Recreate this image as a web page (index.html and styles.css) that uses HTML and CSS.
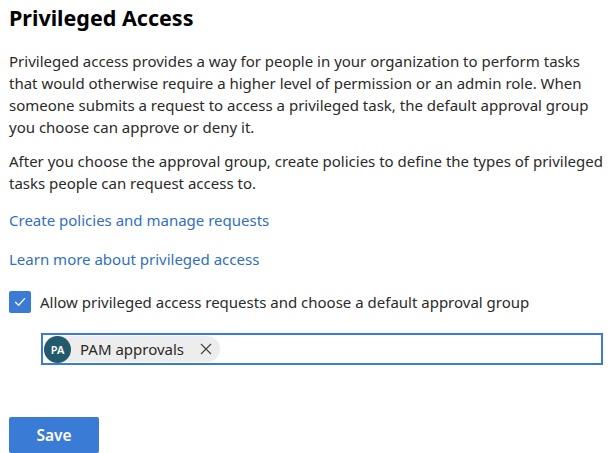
FILE: index.html
```html
<!DOCTYPE html>
<html lang="en">
<head>
<meta charset="utf-8">
<title>Privileged Access</title>
<link rel="stylesheet" href="styles.css">
</head>
<body>
<main class="panel">
  <h1 class="title">Privileged Access</h1>
  <p class="text">Privileged access provides a way for people in your organization to perform tasks that would otherwise require a higher level of permission or an admin role. When someone submits a request to access a privileged task, the default approval group you choose can approve or deny it.</p>
  <p class="text">After you choose the approval group, create policies to define the types of privileged tasks people can request access to.</p>
  <a class="link" href="#">Create policies and manage requests</a>
  <a class="link" href="#">Learn more about privileged access</a>
  <label class="check-row">
    <span class="checkbox">
      <svg width="14" height="14" viewBox="0 0 14 14"><path d="M2.5 7.3 L5.6 10.2 L11.6 3.6" fill="none" stroke="#fff" stroke-width="1.3" stroke-linecap="round" stroke-linejoin="round"/></svg>
    </span>
    <span class="check-label">Allow privileged access requests and choose a default approval group</span>
  </label>
  <div class="picker">
    <span class="chip">
      <span class="avatar">PA</span>
      <span class="chip-name">PAM approvals</span>
      <svg class="chip-x" width="12" height="12" viewBox="0 0 12 12"><path d="M1 1 L11 11 M11 1 L1 11" stroke="#444" stroke-width="1.2"/></svg>
    </span>
  </div>
  <button class="save" type="button">Save</button>
</main>
</body>
</html>
```
FILE: styles.css
```css
html, body {
  margin: 0;
  padding: 0;
  background: #fff;
}
body {
  font-family: "Noto Sans", "Open Sans", sans-serif;
  color: #2b2a29;
}
.panel {
  padding: 0 8px 0 9px;
  display: flex;
  flex-direction: column;
  align-items: flex-start;
}
.title {
  margin: 0;
  font-size: 21.5px;
  line-height: 36px;
  font-weight: 700;
  color: #000;
}
.text {
  margin: 14px 0 0 0;
  font-size: 15px;
  line-height: 22px;
  max-width: 598px;
}
.text + .text {
  margin-top: 12px;
}
.link {
  margin-top: 15px;
  font-size: 15px;
  line-height: 22px;
  color: #2f6fc5;
  text-decoration: none;
}
.link + .link {
  margin-top: 17px;
}
.check-row {
  display: flex;
  align-items: center;
  gap: 9px;
  margin-top: 21px;
}
.checkbox {
  width: 22px;
  height: 22px;
  border-radius: 2px;
  background: #3a7bd5;
  display: flex;
  align-items: center;
  justify-content: center;
}
.check-label {
  font-size: 15px;
  line-height: 22px;
}
.picker {
  margin: 20px 0 0 32px;
  width: 556px;
  height: 26px;
  border: 2px solid #3a7bd5;
  padding: 1px;
  display: flex;
  align-items: center;
}
.chip {
  display: flex;
  align-items: center;
  height: 26px;
  background: #ededed;
  border-radius: 13px;
  padding-right: 8px;
}
.avatar {
  width: 27px;
  height: 27px;
  border-radius: 50%;
  background: #225a6b;
  color: #fff;
  font-size: 11px;
  font-weight: 600;
  display: flex;
  align-items: center;
  justify-content: center;
}
.chip-name {
  margin-left: 9px;
  font-size: 15px;
  line-height: 22px;
}
.chip-x {
  margin-left: 16px;
}
.save {
  margin-top: 52px;
  width: 90px;
  height: 36px;
  border: none;
  border-radius: 2px;
  background: #3a7bd5;
  color: #fff;
  font-family: "Noto Sans", sans-serif;
  font-size: 15.5px;
  font-weight: 600;
}
```
